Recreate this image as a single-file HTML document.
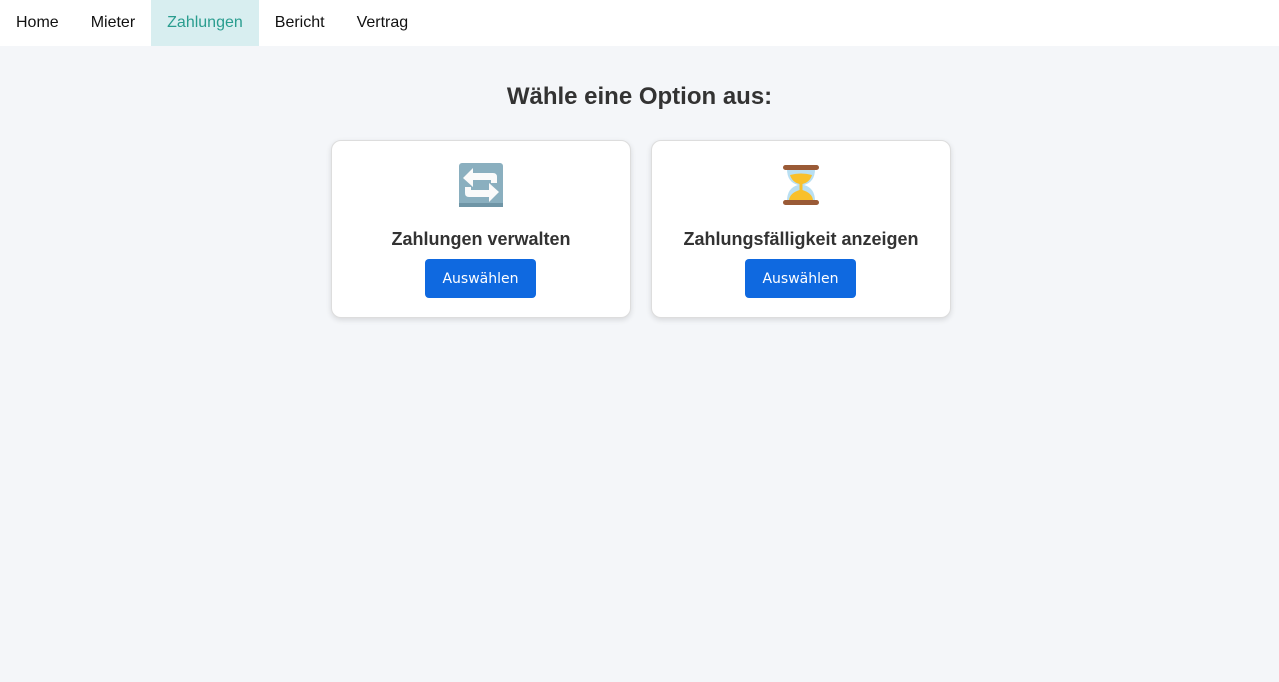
<!DOCTYPE html>
<html><head><meta charset="utf-8"><style>
body{margin:0;background:#f4f6f9;font-family:"Liberation Sans",sans-serif;width:1279px;height:682px;overflow:hidden}
nav{height:46px;background:#fff;display:flex}
nav a{display:block;padding:0 16px;line-height:45px;font-size:16px;color:#111;text-decoration:none}
nav a.act{background:#d8eef0;color:#2a9d8f}
h2{text-align:center;margin:0;position:absolute;top:83px;left:0;width:1279px;font-size:24px;color:#333;font-weight:bold}
.card{position:absolute;top:140px;width:298px;height:176px;background:#fff;border:1px solid #ddd;border-radius:10px;box-shadow:0 2px 6px rgba(0,0,0,.12);text-align:center}
.ic{position:absolute;left:125px;top:20px;width:48px;height:48px}
.t{position:absolute;top:88px;left:0;width:100%;font-size:18px;font-weight:bold;color:#333}
.b{position:absolute;top:118px;left:93px;width:111px;height:39px;background:#0f69e0;border-radius:4px;color:#fff;font-size:14px;line-height:40px;font-family:"DejaVu Sans",sans-serif}
</style></head><body>
<nav><a>Home</a><a>Mieter</a><a class="act">Zahlungen</a><a>Bericht</a><a>Vertrag</a></nav>
<h2>Wähle eine Option aus:</h2>
<div class="card" style="left:331px">
<svg class="ic" viewBox="0 0 48 48"><rect x="2" y="2" width="44" height="44" rx="3" fill="#8aafbf"/><rect x="2" y="42" width="44" height="4" fill="#6f95a6"/><path d="M6 17 L16 7 L16 12 L36 12 Q40 12 40 16 L40 22 L34 22 L34 19 L16 19 L16 26 Z" fill="#fafafa"/><path d="M42 31 L32 41 L32 36 L12 36 Q8 36 8 32 L8 26 L14 26 L14 29 L32 29 L32 22 Z" fill="#fafafa"/></svg>
<div class="t">Zahlungen verwalten</div><div class="b">Auswählen</div></div>
<div class="card" style="left:651px">
<svg class="ic" viewBox="0 0 48 48"><path d="M10 8 Q10 21 21 24 Q10 27 10 40 L38 40 Q38 27 27 24 Q38 21 38 8 Z" fill="#b9dff2"/><path d="M13 14 Q24 11 35 14 Q33 21 25.5 23 L25.5 29 Q35 32 36 39 L12 39 Q13 32 22.5 29 L22.5 23 Q15 21 13 14Z" fill="#f9c02a"/><rect x="6" y="4" width="36" height="5" rx="2.5" fill="#9a5a36"/><rect x="6" y="39" width="36" height="5" rx="2.5" fill="#9a5a36"/></svg>
<div class="t">Zahlungsfälligkeit anzeigen</div><div class="b">Auswählen</div></div>
</body></html>
